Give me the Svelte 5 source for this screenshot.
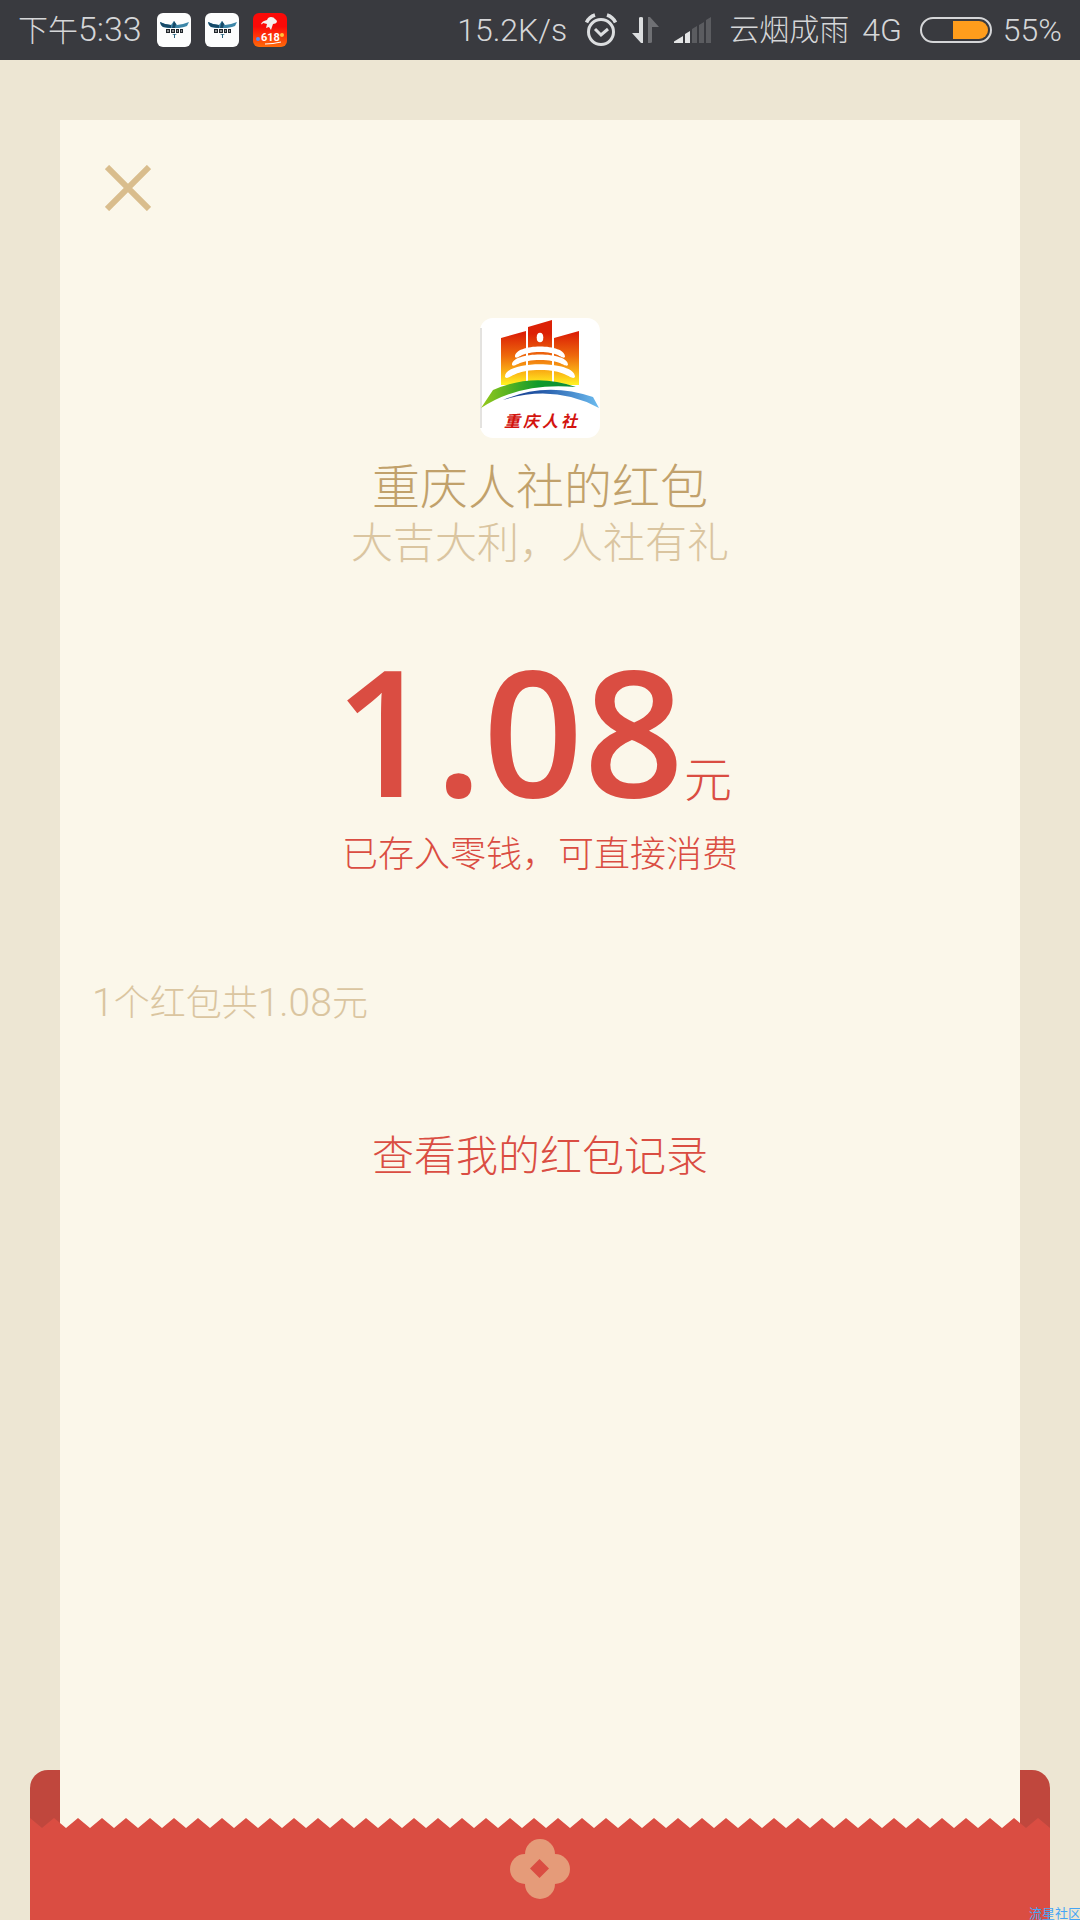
<script>
  const status = {
    time: { period: '下午', clock: '5:33' },
    speed: '15.2K/s',
    carrier: '云烟成雨',
    network: '4G',
    battery: 55
  };

  const packet = {
    sender: '重庆人社',
    greeting: '大吉大利，人社有礼',
    amount: '1.08',
    count: 1
  };

  // left edge of each character under the logo
  const logoLetters = [24, 43, 62, 81];

  const wingApps = ['wing-1', 'wing-2'];
</script>

<div class="page">
  <header class="status-bar">
    <div class="status-left">
      <span class="time"><span class="cjk">{status.time.period}</span>{status.time.clock}</span>
      <div class="apps">
        {#each wingApps as app (app)}
          <svg class="app-icon" viewBox="0 0 34 34" aria-hidden="true">
            <rect width="34" height="34" rx="6" fill="#fcfdfd" />
            <path d="M3 9l5 2 6 1 1.500-2 1.500-2 1.500 2 1.500 2 6-1 6-2-2 4-3 1-5 1H11l-5-1-2-2z" fill="#3c86a8" />
            <path d="M3 9l5 2 6 1v3l-8-1-2-2zM17 8l2 3-1 4h-3l1-4z" fill="#174a68" />
            <path d="M9 16h4v4H9zM14 16h4v4h-4zM19 16h3v4h-3zM23 16h3v4h-3z" fill="#20262b" />
            <path d="M10 18h2M15 18h2M20 18h1M24 18h1" stroke="#fff" stroke-width="1" />
            <path d="M15 21h5l-2 1v3h-1v-3z" fill="#27637f" />
          </svg>
        {/each}
        <svg class="app-icon" viewBox="0 0 34 34" aria-hidden="true">
          <defs>
            <linearGradient id="sale" x1="0" y1="0" x2="0" y2="1">
              <stop offset="0.4" stop-color="#fb0a08" />
              <stop offset="1" stop-color="#ff6a08" />
            </linearGradient>
          </defs>
          <rect width="34" height="34" rx="6" fill="url(#sale)" />
          <path d="M8 11q1-3 6-4 1-3 4-3 3 0 4 2 2 1 2 3-1 2-4 2l-2 6-2-3-3 1 1-4-4-1q-1 2-2 1z" fill="#f4f1ef" />
          <circle cx="5" cy="26" r="2" fill="#5b8df0" />
          <circle cx="29" cy="22" r="2" fill="#ffc33c" />
          <text x="8" y="28" class="sale-text">618</text>
          <path d="M12 31q8 0 16-2" fill="none" stroke="#fff" stroke-width="1" />
        </svg>
      </div>
    </div>

    <div class="status-right">
      <span>{status.speed}</span>
      <div class="indicators">
        <svg width="32" height="34" viewBox="0 0 32 34" aria-label="Alarm">
          <g fill="none" stroke="#dcdee0">
            <circle cx="16" cy="19" r="12.500" stroke-width="3" />
            <path d="M10 16l6 6 7-6" stroke-width="3" />
            <path d="M1.500 9.500Q4 4 10 2M30.500 9.500Q28 4 22 2" stroke-width="3.500" />
          </g>
        </svg>
        <svg width="27" height="26" viewBox="0 0 27 26" aria-label="Data">
          <path d="M7 1q0-1 2-1t2 1v25h-2L0 16h7z" fill="#dcdee0" />
          <path d="M16 26V0h2l9 10h-7v15q0 1-2 1z" fill="#6f7074" />
        </svg>
        <svg width="37" height="26" viewBox="0 0 37 26" aria-label="Signal">
          <path d="M0 26v-1.500L9 19v7zM11 17l5-3v12h-5z" fill="#e4e5e6" />
          <path d="M18 12l5-3v17h-5zM25 8l5-3v21h-5zM32 3l5-3v26h-5z" fill="#5b5c60" />
        </svg>
      </div>
      <div class="network">
        <span class="cjk">{status.carrier}</span>
        <span>{status.network}</span>
      </div>
      <div class="power">
        <div class="battery">
          <div class="battery-level" style="width: {status.battery}%"></div>
        </div>
        <span>{status.battery}%</span>
      </div>
    </div>
  </header>

  <main class="stage">
    <section class="paper">
      <button class="close" type="button" aria-label="关闭">
        <svg width="46" height="46" viewBox="0 0 46 46" aria-hidden="true">
          <path d="M2 2l42 42M44 2L2 44" fill="none" stroke="#d9bd8d" stroke-width="6" />
        </svg>
      </button>

      <svg class="logo" viewBox="0 0 120 120" role="img" aria-label={packet.sender}>
        <defs>
          <linearGradient id="tower" gradientUnits="userSpaceOnUse" x1="0" y1="10" x2="0" y2="66">
            <stop offset="0.1" stop-color="#dc2106" />
            <stop offset="0.5" stop-color="#ee6a0c" />
            <stop offset="0.8" stop-color="#fbb616" />
            <stop offset="1" stop-color="#fff021" />
          </linearGradient>
          <linearGradient id="hill">
            <stop offset="0" stop-color="#97c91b" />
            <stop offset="0.6" stop-color="#0f9a2b" />
            <stop offset="1" stop-color="#0f8a3a" />
          </linearGradient>
          <linearGradient id="river">
            <stop offset="0" stop-color="#1a3c8c" />
            <stop offset="0.4" stop-color="#2459a8" />
            <stop offset="1" stop-color="#6cbcf0" />
          </linearGradient>
        </defs>
        <rect width="120" height="120" rx="13" fill="#fff" />
        <path d="M1 10v100" stroke="#c9c6c0" stroke-width="1" />
        <path d="M21 20l25-7v54H21zM48 9l24-7v65H48zM74 20l25-7v54H74z" fill="url(#tower)" />
        <ellipse cx="60" cy="19.500" rx="3.300" ry="4.800" fill="#fff" />
        <g fill="#fff">
          <path d="M35 39C34 25 86 25 85 39C82 42 80 34 60 34S38 42 35 39z" />
          <path d="M32 47C31 33 89 33 88 47C85 50 82 42 60 42S35 50 32 47z" />
          <path d="M25 59C24 42 96 42 95 59C91 63 88 52 60 52S29 63 25 59z" />
        </g>
        <path d="M18 70Q60 58 102 70z" fill="#fff" />
        <path d="M1 90l12-18Q54 54 96 69Q40 64 1 90z" fill="url(#hill)" />
        <path d="M23 82Q66 63 113 79l6 11Q74 66 23 82z" fill="url(#river)" />
        {#each packet.sender.split('') as letter, i (i)}
          <text x={logoLetters[i]} y="109" class="logo-text">{letter}</text>
        {/each}
      </svg>

      <h1 class="sender">{packet.sender}的红包</h1>
      <p class="greeting">{packet.greeting}</p>

      <p class="amount">
        <span class="amount-value">{packet.amount}</span>
        <span class="amount-unit">元</span>
      </p>
      <p class="note">已存入零钱，可直接消费</p>

      <p class="summary">
        <span class="digits">{packet.count}</span>个红包共<span class="digits">{packet.amount}</span>元
      </p>

      <a class="history" href="#history">查看我的红包记录</a>
    </section>

    <div class="envelope-back"></div>
    <div class="envelope-front">
      <svg class="teeth" aria-hidden="true">
        <defs>
          <pattern id="tooth" width="24" height="10" patternUnits="userSpaceOnUse">
            <path d="M0 0l12 10L24 0v10H0z" fill="#da4d42" />
          </pattern>
        </defs>
        <rect width="100%" height="10" fill="url(#tooth)" />
      </svg>
      <div class="envelope-body">
        <svg width="60" height="60" viewBox="0 0 60 60" aria-hidden="true">
          <g fill="#e59b79">
            <circle cx="30" cy="15" r="15" />
            <circle cx="15" cy="30" r="15" />
            <circle cx="45" cy="30" r="15" />
            <circle cx="30" cy="45" r="15" />
            <rect x="15" y="15" width="30" height="30" />
          </g>
          <path d="M29.500 20l9.500 9.500-9.500 9.500-9.500-9.500z" fill="#da4d42" />
        </svg>
      </div>
    </div>
  </main>

  <span class="watermark">流星社区</span>
</div>

<style>
  :global(body) {
    margin: 0;
    background: #ede6d3;
  }

  .page {
    position: relative;
    display: flex;
    flex-direction: column;
    min-height: 100vh;
    overflow: hidden;
    font-family: Roboto, "Noto Sans CJK SC", sans-serif;
    font-weight: 300;
  }

  /* Status bar */
  .status-bar {
    display: flex;
    align-items: center;
    justify-content: space-between;
    height: 60px;
    padding: 0 18px;
    background: #393a3f;
    color: #d5d6d8;
    font-size: 32px;
    line-height: 58px;
    white-space: nowrap;
  }

  .status-left,
  .status-right,
  .indicators,
  .network,
  .power,
  .apps {
    display: flex;
    align-items: center;
  }

  .status-left {
    gap: 15px;
  }

  .status-right {
    gap: 18px;
  }

  .apps {
    gap: 14px;
  }

  .indicators {
    gap: 15px;
  }

  .network {
    gap: 13px;
  }

  .power {
    gap: 11px;
  }

  .time {
    font-size: 34px;
  }

  .cjk {
    font-size: 30px;
  }

  .app-icon {
    width: 34px;
    height: 34px;
  }

  .sale-text {
    fill: #fff;
    font-size: 11px;
    font-weight: 700;
  }

  .battery {
    display: flex;
    justify-content: flex-end;
    box-sizing: border-box;
    width: 72px;
    height: 26px;
    padding: 2px;
    border: 2px solid #d5d6d8;
    border-radius: 13px;
  }

  .battery-level {
    border-radius: 0 9px 9px 0;
    background: #ff9d1c;
  }

  /* Card and envelope share one grid so they can overlap */
  .stage {
    flex: 1;
    display: grid;
    grid-template-columns: 30px 1fr 30px;
    grid-template-rows: 1fr 48px 102px;
    padding: 60px 30px 0;
    background: #ede6d3;
  }

  .paper {
    z-index: 1;
    grid-column: 2;
    grid-row: 1 / 4;
    display: flex;
    flex-direction: column;
    align-items: center;
    padding: 45px 32px 150px;
    background: #fbf7ea;
  }

  .envelope-back {
    grid-column: 1 / 4;
    grid-row: 2 / 4;
    border-radius: 18px 18px 0 0;
    background: #c0473d;
  }

  .envelope-front {
    z-index: 2;
    grid-column: 1 / 4;
    grid-row: 3;
    display: flex;
    flex-direction: column;
  }

  .teeth {
    display: block;
    width: 100%;
    height: 10px;
  }

  .envelope-body {
    flex: 1;
    display: flex;
    justify-content: center;
    padding-top: 11px;
    background: #da4d42;
  }

  .close {
    align-self: flex-start;
    margin: 0 0 107px 13px;
    padding: 0;
    border: none;
    background: none;
    cursor: pointer;
  }

  .close svg {
    display: block;
  }

  .logo {
    width: 120px;
    height: 120px;
    margin-bottom: 22px;
  }

  .logo-text {
    fill: #d3140f;
    font-size: 16px;
    font-style: italic;
    font-weight: 700;
  }

  .sender,
  .greeting,
  .amount,
  .note,
  .summary {
    margin: 0;
    font-weight: 300;
  }

  .sender {
    color: #c1a16b;
    font-size: 48px;
    line-height: 56px;
  }

  .greeting {
    color: #dac5a0;
    font-size: 42px;
    line-height: 56px;
  }

  .amount {
    display: flex;
    align-items: baseline;
    margin-top: 67px;
    padding-right: 14px;
    color: #da4d42;
  }

  .amount-value {
    font-family: "Open Sans", sans-serif;
    font-size: 176px;
    font-weight: 600;
    line-height: 180px;
  }

  .amount-unit {
    font-size: 48px;
    line-height: 48px;
  }

  .note {
    margin-top: 12px;
    color: #da4d42;
    font-size: 36px;
    line-height: 48px;
  }

  .summary {
    align-self: flex-start;
    margin-top: 100px;
    color: #dac5a0;
    font-size: 36px;
    line-height: 48px;
  }

  .digits {
    font-size: 39px;
  }

  .history {
    margin-top: 101px;
    color: #da4d42;
    font-size: 42px;
    line-height: 56px;
    text-decoration: none;
  }

  .watermark {
    position: absolute;
    right: -1px;
    bottom: 0;
    z-index: 3;
    color: #45a5f5;
    font-size: 13px;
    font-weight: 400;
    line-height: 13px;
  }
</style>
